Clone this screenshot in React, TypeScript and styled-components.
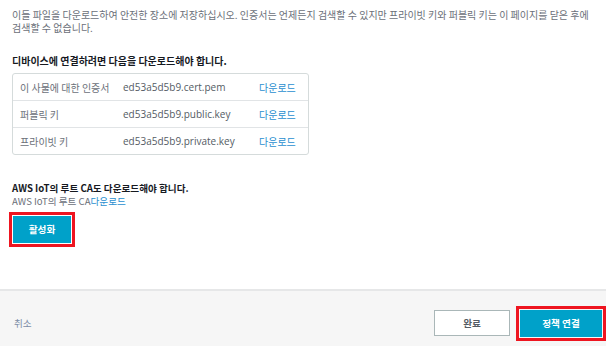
import React from "react";
import styled, { createGlobalStyle } from "styled-components";

const Global = createGlobalStyle`
  html, body { margin: 0; padding: 0; background: #fff; }
  body { font-family: "Noto Sans CJK KR", "Noto Sans", sans-serif; color: #545b64; }
  * { box-sizing: border-box; }
`;

const Page = styled.div`
  width: 606px;
  height: 346px;
  display: flex;
  flex-direction: column;
  overflow: hidden;
`;

const Content = styled.div`
  flex: 1;
  padding: 8px 12px 0 12px;
  display: flex;
  flex-direction: column;
`;

const Intro = styled.p`
  margin: 0;
  font-size: 10px;
  line-height: 13px;
  color: #6b7079;
  word-break: keep-all;
`;

const Heading = styled.h3`
  margin: 20px 0 6px 0;
  font-size: 10px;
  line-height: 13px;
  font-weight: 700;
  color: #16191f;
`;

const Table = styled.div`
  width: 297px;
  border: 1px solid #d5dbdb;
  border-radius: 3px;
  display: flex;
  flex-direction: column;
`;

const Row = styled.div<{ $last?: boolean }>`
  height: ${(p) => (p.$last ? 26 : 27)}px;
  display: grid;
  grid-template-columns: 103px 136px 1fr;
  align-items: center;
  padding-left: 7px;
  border-bottom: ${(p) => (p.$last ? "none" : "1px solid #e1e4e6")};
  font-size: 10px;
`;

const Label = styled.span`
  color: #6b7079;
`;

const File = styled.span`
  color: #545b64;
  font-family: "Open Sans", "Noto Sans", sans-serif;
  font-size: 10px;
`;

const Link = styled.a`
  color: #2a8fd0;
  text-decoration: none;
  cursor: pointer;
`;

const RootTitle = styled.div`
  margin-top: 27px;
  font-size: 9.6px;
  line-height: 13px;
  font-weight: 700;
  color: #16191f;
`;

const RootSub = styled.div`
  font-size: 9.6px;
  line-height: 13px;
  color: #6b7079;
`;

const Highlighted = styled.button<{ $w: number }>`
  width: ${(p) => p.$w}px;
  height: 27px;
  background: #00a1c9;
  color: #fff;
  border: 1px solid #00a1c9;
  font-family: "Noto Sans CJK KR", sans-serif;
  font-size: 9.6px;
  font-weight: 700;
  outline: 3px solid #ee1520;
  outline-offset: 1px;
  padding: 0;
`;

const ActivateWrap = styled.div`
  margin-top: 6px;
  padding-left: 1px;
`;

const Footer = styled.div`
  height: 57px;
  border-top: 2px solid #e6e7e8;
  background: #f6f6f6;
  display: flex;
  align-items: center;
  padding: 9px 4px 0 14px;
`;

const Cancel = styled.a`
  font-size: 9.6px;
  color: #7d8da6;
  flex: 1;
`;

const Secondary = styled.button`
  width: 76px;
  height: 26px;
  background: #fff;
  border: 1px solid #aab7b8;
  color: #545b64;
  font-family: "Noto Sans CJK KR", sans-serif;
  font-size: 9.6px;
  font-weight: 700;
  margin-right: 10px;
  padding: 0;
`;

const rows = [
  { label: "이 사물에 대한 인증서", file: "ed53a5d5b9.cert.pem" },
  { label: "퍼블릭 키", file: "ed53a5d5b9.public.key" },
  { label: "프라이빗 키", file: "ed53a5d5b9.private.key" },
];

export default function App() {
  return (
    <Page>
      <Global />
      <Content>
        <Intro>
          이들 파일을 다운로드하여 안전한 장소에 저장하십시오. 인증서는 언제든지 검색할 수 있지만 프라이빗 키와 퍼블릭 키는 이 페이지를 닫은 후에
          검색할 수 없습니다.
        </Intro>
        <Heading>디바이스에 연결하려면 다음을 다운로드해야 합니다.</Heading>
        <Table>
          {rows.map((r, i) => (
            <Row key={r.file} $last={i === rows.length - 1}>
              <Label>{r.label}</Label>
              <File>{r.file}</File>
              <Link>다운로드</Link>
            </Row>
          ))}
        </Table>
        <RootTitle>AWS IoT의 루트 CA도 다운로드해야 합니다.</RootTitle>
        <RootSub>
          AWS IoT의 루트 CA<Link>다운로드</Link>
        </RootSub>
        <ActivateWrap>
          <Highlighted $w={58}>활성화</Highlighted>
        </ActivateWrap>
      </Content>
      <Footer>
        <Cancel>취소</Cancel>
        <Secondary>완료</Secondary>
        <Highlighted $w={82}>정책 연결</Highlighted>
      </Footer>
    </Page>
  );
}
